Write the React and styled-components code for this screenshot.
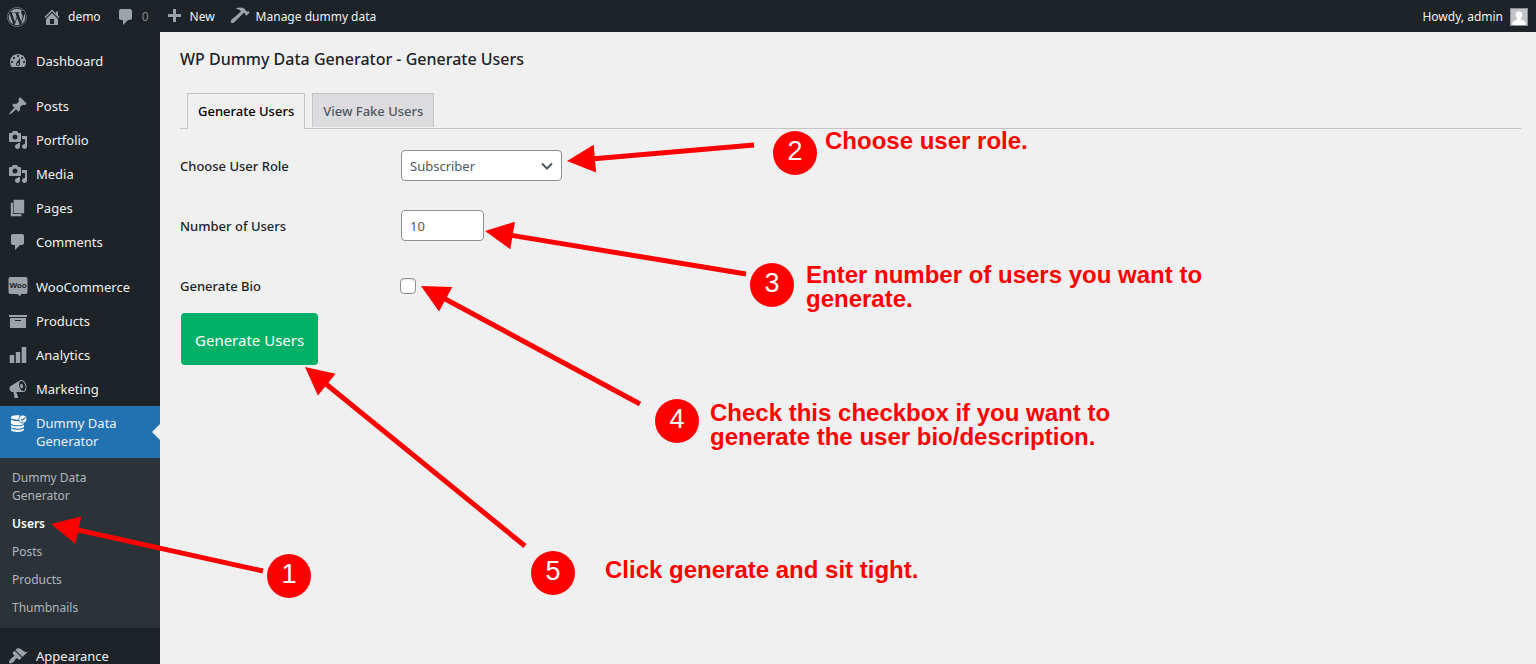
import React from "react";
import styled, { createGlobalStyle } from "styled-components";
import { FaWordpress } from "react-icons/fa";

const GlobalStyle = createGlobalStyle`
  *, *::before, *::after { box-sizing: border-box; }
  body {
    margin: 0;
    background: #f0f0f0;
    color: #3c434a;
    font-family: "Noto Sans", "Open Sans", sans-serif;
    font-size: 13px;
  }
  a { color: inherit; text-decoration: none; }
  ul { list-style: none; margin: 0; padding: 0; }
`;

/* ---------- icons ---------- */

const paths = {
  home: "M16 8.5l1.53 1.53-1.06 1.06L10 4.6l-6.47 6.49-1.06-1.06L10 2.5l4 4v-2h2v4zm-6-2.46l6 5.99V18H4v-5.97zM12 17v-5H8v5h4z",
  comments: "M5 2h9c1.1 0 2 .9 2 2v7c0 1.1-.9 2-2 2h-2l-5 5v-5H5c-1.1 0-2-.9-2-2V4c0-1.1.9-2 2-2z",
  plus: "M17 7v3h-5v5H9v-5H4V7h5V2h3v5h5z",
  hammer: "M5.7 1.6C8 .5 11.500.1 13.700 1.200c2 1 2.200 2.900 3.400 3.500l1.200-.7 1.300 1.400-3 3.400-1.500-1.300.3-1.200c-.8-.6-1.600-.5-2.300.1l-9.100 9c-.9.8-2 .8-2.700 0-.8-.8-.7-1.800.2-2.600l9.500-8.400C9.700 2.800 8.100 2.100 5.700 1.600z",
  dashboard: "M3.76 16h12.48c1.1-1.37 1.76-3.11 1.76-5 0-4.42-3.58-8-8-8s-8 3.58-8 8c0 1.89.66 3.63 1.76 5zM10 4c.55 0 1 .45 1 1s-.45 1-1 1-1-.45-1-1 .45-1 1-1zM6 6c.55 0 1 .45 1 1s-.45 1-1 1-1-.45-1-1 .45-1 1-1zm8 0c.55 0 1 .45 1 1s-.45 1-1 1-1-.45-1-1 .45-1 1-1zm-5.37 5.55L12 7v6c0 1.1-.9 2-2 2s-2-.9-2-2c0-.57.24-1.08.63-1.45zM4 10c.55 0 1 .45 1 1s-.45 1-1 1-1-.45-1-1 .45-1 1-1zm12 0c.55 0 1 .45 1 1s-.45 1-1 1-1-.45-1-1 .45-1 1-1zm-5 3c0-.55-.45-1-1-1s-1 .45-1 1 .45 1 1 1 1-.45 1-1z",
  pin: "M10.44 3.02l1.82-1.82 6.36 6.35-1.83 1.82c-1.05-.68-2.48-.57-3.41.36l-.75.75c-.92.93-1.04 2.35-.35 3.41l-1.83 1.82-2.41-2.41-2.8 2.79c-.42.42-3.38 2.71-3.8 2.29s1.86-3.39 2.28-3.81l2.79-2.79L4.1 9.36l1.83-1.82c1.05.69 2.48.57 3.4-.36l.75-.75c.93-.92 1.05-2.35.36-3.41z",
  media: "M13 11V4c0-.55-.45-1-1-1h-1.67L9 1H5L3.67 3H2c-.55 0-1 .45-1 1v7c0 .55.45 1 1 1h10c.55 0 1-.45 1-1zM7 4.5c1.38 0 2.5 1.12 2.5 2.5S8.38 9.5 7 9.5 4.5 8.38 4.5 7 5.62 4.5 7 4.5zM14 6h5v10.5c0 1.38-1.12 2.5-2.5 2.5S14 17.88 14 16.5s1.12-2.5 2.5-2.5c.17 0 .34.02.5.05V9h-3V6zm-4 8.05V13h2v3.5c0 1.38-1.12 2.5-2.5 2.5S7 17.88 7 16.5 8.12 14 9.5 14c.17 0 .34.02.5.05z",
  page: "M5.600 15.200V1.800h10.600v13.400H5.600zM5 16h8.500v2.200H2.800V4.800H5V16z",
  archive: "M19 4v2H1V4h18zM2 7h16v10H2V7zm11 3V9H7v1h6z",
  chart: "M18.300 18V2h-4.600v16h4.600zm-6.100 0V7H7.800v11h4.400zm-6 0v-8H1.700v8h4.500z",
  megaphone: "M18.15 5.94c.46 1.62.38 3.22-.02 4.48-.42 1.28-1.26 2.18-2.3 2.48-.16.06-.26.06-.4.06-.06.02-.12.02-.18.02-.06.02-.14.02-.22.02h-6.8l2.22 5.5c.02.14-.06.26-.14.34-.08.1-.24.16-.34.16H6.95c-.1 0-.26-.06-.34-.16-.08-.08-.16-.2-.14-.34l-1-5.5H4.25l-.02-.02c-.5.06-1.08-.18-1.54-.62s-.88-1.08-1.06-1.88c-.24-.8-.2-1.56-.02-2.2.18-.62.58-1.08 1.06-1.3l.02-.02 9-5.4c.1-.06.18-.1.24-.16.06-.04.14-.08.24-.12.16-.08.28-.12.5-.18 1.04-.3 2.24.1 3.22.98s1.84 2.24 2.26 3.86zm-2.58 5.98h-.02c.4-.1.74-.34 1.04-.7.58-.7.86-1.76.86-3.04 0-.64-.1-1.3-.28-1.98-.34-1.36-1.02-2.5-1.78-3.24s-1.68-1.1-2.46-.88c-.82.22-1.4.96-1.7 2-.32 1.04-.28 2.36.06 3.72.38 1.36 1 2.5 1.8 3.24.78.74 1.62 1.1 2.48.88zm-2.54-7.08c.22-.04.42-.02.62.04.38.16.76.48 1.02 1s.42 1.2.42 1.78c0 .3-.04.56-.12.8-.18.48-.44.84-.86.94-.34.1-.8-.06-1.14-.4s-.64-.86-.78-1.5c-.18-.62-.12-1.24.02-1.72s.48-.84.82-.94z",
  brush: "M14.48 11.06L7.41 3.99l1.5-1.5c.5-.56 2.3-.47 3.51.32 1.21.8 1.43 1.28 2.91 2.1 1.18.64 2.45 1.26 4.45.85zm-.71.71L6.7 4.7 4.93 6.47c-.39.39-.39 1.02 0 1.41l1.06 1.06c.39.39.39 1.03 0 1.42-.6.6-1.43 1.11-2.21 1.69-.35.26-.7.53-1.01.84C1.43 14.23.4 16.08 1.4 17.07c.99 1 2.84-.03 4.18-1.36.31-.31.58-.66.85-1.02.57-.78 1.08-1.61 1.69-2.21.39-.39 1.02-.39 1.41 0l1.06 1.06c.39.39 1.02.39 1.41 0z",
};

const IconSvg = styled.svg`
  flex: none;
  display: block;
  width: 20px;
  height: 20px;
  fill: currentColor;
`;

function Icon({ name }) {
  if (name === "woo") {
    return (
      <IconSvg viewBox="0 0 20 20" aria-hidden="true">
        <path d="M2.5 0h15a2 2 0 0 1 2 2v13a2 2 0 0 1-2 2H13l-.8 2.600L9.500 17h-7a2 2 0 0 1-2-2V2a2 2 0 0 1 2-2z" />
        <text x="10" y="11" textAnchor="middle" fontFamily="Liberation Sans, sans-serif" fontWeight="700" fontSize="8" fill="#1d2327">Woo</text>
      </IconSvg>
    );
  }
  if (name === "database") {
    return (
      <IconSvg viewBox="0 0 20 20" aria-hidden="true">
        <path d="M3 3.600C3 2 6 1.300 9.500 1.300c.9 0 1.700 0 2.500.2a4.300 4.300 0 0 0-1.500 4.200h-1C6 5.700 3 5.100 3 3.600z" />
        <path d="M3 5.500c1.300 1 3.800 1.500 6.500 1.500h1.400c.8 1.500 2.200 2.400 4 2.400.4 0 .8 0 1.100-.1v.1c-.5 1.200-3.300 1.900-6.500 1.900S3 10.600 3 9.100z" />
        <path d="M3 10.800c1.300 1 3.800 1.500 6.500 1.500s5.200-.5 6.500-1.500v2c-.5 1.200-3.300 1.900-6.500 1.900S3 14 3 12.800z" />
        <path d="M3 14.300c1.300 1 3.800 1.500 6.500 1.500s5.200-.5 6.500-1.500v1.500c-.5 1.500-3.300 2.200-6.500 2.200S3 17.300 3 15.800z" />
        <circle cx="14.800" cy="5" r="3.600" />
        <path d="M12.900 4.900l1.500 1.600L17.300 3.300" fill="none" stroke="#2271b1" strokeWidth="1.100" />
      </IconSvg>
    );
  }
  return (
    <IconSvg viewBox="0 0 20 20" aria-hidden="true">
      <path fillRule="evenodd" d={paths[name]} />
    </IconSvg>
  );
}

/* ---------- admin bar ---------- */

const Shell = styled.div`
  position: relative;
  display: flex;
  flex-direction: column;
  height: 100vh;
  overflow: hidden;
`;

const AdminBar = styled.header`
  flex: none;
  display: flex;
  align-items: center;
  gap: 15px;
  height: 32px;
  padding: 2px 8px 0 7px;
  background: #1d2327;
  color: #f0f0f1;
  font-size: 12px;
  line-height: 30px;
`;

const BarLink = styled.a`
  display: flex;
  align-items: center;
  gap: ${(p) => (p.$end ? 7 : 6)}px;
  height: 30px;
  margin-left: ${(p) => (p.$end ? "auto" : 0)};
  svg { color: #9ca2a7; }
`;

const WpLogo = styled(FaWordpress)`
  width: 20px;
  height: 20px;
`;

const Count = styled.span`
  color: #80868b;
`;

const Avatar = styled.svg`
  width: 18px;
  height: 18px;
  border: 1px solid #8c8f94;
  background: #c3c4c7;
`;

/* ---------- side menu ---------- */

const Body = styled.div`
  flex: 1;
  display: flex;
  min-height: 0;
`;

const Sidebar = styled.nav`
  flex: none;
  width: 160px;
  padding-top: 12px;
  overflow: hidden;
  background: #1d2327;
  color: #f0f0f1;
`;

const MenuItem = styled.li`
  margin-top: ${(p) => (p.$group ? 11 : 0)}px;
`;

const MenuLink = styled.a`
  position: relative;
  display: flex;
  align-items: flex-start;
  gap: 8px;
  padding: ${(p) => (p.$current ? "8px" : "7px 8px")};
  background: ${(p) => (p.$current ? "#2271b1" : "transparent")};
  line-height: ${(p) => (p.$current ? 18 : 20)}px;
  svg { color: ${(p) => (p.$current ? "#fff" : "#9ca2a7")}; }
  &::after {
    content: ${(p) => (p.$current ? '""' : "none")};
    position: absolute;
    right: 0;
    top: 50%;
    margin-top: -8px;
    border: 8px solid transparent;
    border-left-width: 0;
    border-right-color: #f0f0f0;
  }
`;

const SubMenu = styled.ul`
  padding: 6px 0;
  background: #2c3338;
`;

const SubLink = styled.a`
  display: block;
  padding: 5px 32px 5px 12px;
  color: ${(p) => (p.$current ? "#fff" : "#b1b5b8")};
  font-size: 12px;
  font-weight: ${(p) => (p.$current ? 600 : 400)};
  line-height: 18px;
`;

const menu = [
  { icon: "dashboard", label: "Dashboard" },
  { icon: "pin", label: "Posts", group: true },
  { icon: "media", label: "Portfolio" },
  { icon: "media", label: "Media" },
  { icon: "page", label: "Pages" },
  { icon: "comments", label: "Comments" },
  { icon: "woo", label: "WooCommerce", group: true },
  { icon: "archive", label: "Products" },
  { icon: "chart", label: "Analytics" },
  { icon: "megaphone", label: "Marketing" },
  {
    icon: "database",
    label: "Dummy Data Generator",
    current: true,
    children: ["Dummy Data Generator", "Users", "Posts", "Products", "Thumbnails"],
  },
  { icon: "brush", label: "Appearance", group: true },
];

/* ---------- page ---------- */

const Main = styled.main`
  flex: 1;
  min-width: 0;
  padding: 15px 15px 0 20px;
`;

const Title = styled.h1`
  margin: 0 0 22px;
  color: #1d2327;
  font-size: 16px;
  font-weight: 500;
  line-height: 24px;
`;

const Tabs = styled.nav`
  display: flex;
  align-items: flex-start;
  gap: 7px;
  height: 36px;
  padding-left: 7px;
  border-bottom: 1px solid #c3c4c7;
`;

const Tab = styled.a`
  height: ${(p) => (p.$active ? 36 : 34)}px;
  padding: 0 10px;
  border: 1px solid #c3c4c7;
  border-bottom: 0;
  background: ${(p) => (p.$active ? "#f0f0f0" : "#dcdcde")};
  color: ${(p) => (p.$active ? "#000" : "#50575e")};
  font-weight: 500;
  line-height: 35px;
`;

const Form = styled.form`
  padding-top: 21px;
`;

const Fields = styled.div`
  display: grid;
  gap: 29px;
  margin-bottom: 12px;
`;

const Field = styled.div`
  display: grid;
  grid-template-columns: 220px auto;
  align-items: center;
  justify-content: start;
  height: 31px;
`;

const FieldLabel = styled.label`
  color: #1d2327;
  font-weight: 500;
  line-height: 20px;
`;

const SelectBox = styled.div`
  position: relative;
  width: 161px;
  margin: 0 1px;
`;

const controlStyle = `
  display: block;
  height: 31px;
  border: 1px solid #8c8f94;
  border-radius: 4px;
  background: #fff;
  color: #50575e;
  font: 400 13px/29px "Noto Sans", "Open Sans", sans-serif;
`;

const Select = styled.select`
  ${controlStyle}
  width: 100%;
  padding: 1px 24px 0 8px;
  appearance: none;
`;

const Chevron = styled.svg`
  position: absolute;
  right: 9px;
  top: 10px;
  width: 12px;
  height: 12px;
  fill: none;
  stroke: #50575e;
  stroke-width: 2;
  pointer-events: none;
`;

const NumberInput = styled.input`
  ${controlStyle}
  width: 83px;
  margin: 0 1px;
  padding: 1px 8px 0;
  appearance: textfield;
`;

const Checkbox = styled.input`
  appearance: none;
  width: 16px;
  height: 16px;
  margin: 0;
  border: 1px solid #8c8f94;
  border-radius: 4px;
  background: #fff;
  box-shadow: inset 0 1px 2px rgba(0, 0, 0, 0.1);
`;

const SubmitButton = styled.button`
  height: 52px;
  margin: 0 1px;
  padding: 2px 14px 0;
  border: 0;
  border-radius: 4px;
  background: #00b067;
  color: #fff;
  font: 400 15px/20px "Noto Sans", "Open Sans", sans-serif;
`;

/* ---------- tutorial callouts ---------- */

const Annotations = styled.div`
  position: absolute;
  inset: 0;
  pointer-events: none;
  font-family: "Liberation Sans", Arial, sans-serif;
`;

const Arrows = styled.svg`
  position: absolute;
  inset: 0;
  width: 100%;
  height: 100%;
  stroke: #f00;
  stroke-width: 5;
`;

const Badge = styled.span`
  position: absolute;
  left: ${(p) => p.$x}px;
  top: ${(p) => p.$y}px;
  width: 44px;
  height: 44px;
  border-radius: 50%;
  background: #f00;
  color: #fff;
  font-size: 27px;
  line-height: 41px;
  text-align: center;
`;

const Note = styled.p`
  position: absolute;
  left: ${(p) => p.$x}px;
  top: ${(p) => p.$y}px;
  margin: 0;
  color: #f00;
  font-size: 24px;
  font-weight: 700;
  line-height: 24px;
  white-space: pre-line;
`;

const steps = [
  { badge: [267, 554], tip: [51, 524], tail: [263, 571] },
  { badge: [773, 131], tip: [567, 161], tail: [754, 145], at: [825, 129], note: "Choose user role." },
  { badge: [750, 263], tip: [485, 231], tail: [746, 274], at: [806, 263], note: "Enter number of users you want to\ngenerate." },
  { badge: [655, 399], tip: [421, 286], tail: [640, 404], at: [710, 401], note: "Check this checkbox if you want to\ngenerate the user bio/description." },
  { badge: [531, 551], tip: [305, 367], tail: [525, 546], at: [605, 558], note: "Click generate and sit tight." },
];

function Callouts() {
  return (
    <Annotations>
      <Arrows aria-hidden="true">
        {steps.map(({ tip, tail }, i) => {
          const len = Math.hypot(tail[0] - tip[0], tail[1] - tip[1]);
          const ux = (tail[0] - tip[0]) / len;
          const uy = (tail[1] - tip[1]) / len;
          const bx = tip[0] + ux * 28;
          const by = tip[1] + uy * 28;
          const head = [tip, [bx - uy * 14, by + ux * 14], [bx + uy * 14, by - ux * 14]];
          return (
            <g key={i}>
              <line x1={bx - ux} y1={by - uy} x2={tail[0]} y2={tail[1]} />
              <polygon points={head.join(" ")} fill="#f00" stroke="none" />
            </g>
          );
        })}
      </Arrows>
      {steps.map(({ badge, at, note }, i) => (
        <React.Fragment key={i}>
          <Badge $x={badge[0]} $y={badge[1]}>{i + 1}</Badge>
          {note && <Note $x={at[0]} $y={at[1]}>{note}</Note>}
        </React.Fragment>
      ))}
    </Annotations>
  );
}

export default function App() {
  return (
    <Shell>
      <GlobalStyle />
      <AdminBar>
        <BarLink href="#wp" aria-label="About WordPress"><WpLogo /></BarLink>
        <BarLink href="#site"><Icon name="home" />demo</BarLink>
        <BarLink href="#comments"><Icon name="comments" /><Count>0</Count></BarLink>
        <BarLink href="#new"><Icon name="plus" />New</BarLink>
        <BarLink href="#manage"><Icon name="hammer" />Manage dummy data</BarLink>
        <BarLink href="#profile" $end>
          Howdy, admin
          <Avatar viewBox="0 0 16 16" aria-hidden="true">
            <path fill="#fff" d="M8 2.500a3.300 3.300 0 0 1 3.300 3.400c0 1.500-.7 2.800-1.600 3.500v1c1.900.4 4.300 1.300 4.800 3.600V16h-13v-2c.5-2.300 2.900-3.200 4.800-3.600v-1c-.9-.7-1.600-2-1.600-3.500A3.300 3.300 0 0 1 8 2.500z" />
          </Avatar>
        </BarLink>
      </AdminBar>
      <Body>
        <Sidebar aria-label="Main menu">
          <ul>
            {menu.map((m) => (
              <MenuItem key={m.label} $group={m.group}>
                <MenuLink href="#menu" $current={m.current}>
                  <Icon name={m.icon} />
                  <span>{m.label}</span>
                </MenuLink>
                {m.children && (
                  <SubMenu>
                    {m.children.map((c) => (
                      <li key={c}><SubLink href="#sub" $current={c === "Users"}>{c}</SubLink></li>
                    ))}
                  </SubMenu>
                )}
              </MenuItem>
            ))}
          </ul>
        </Sidebar>
        <Main>
          <Title>WP Dummy Data Generator - Generate Users</Title>
          <Tabs aria-label="Sections">
            <Tab href="#generate" $active>Generate Users</Tab>
            <Tab href="#view">View Fake Users</Tab>
          </Tabs>
          <Form onSubmit={(e) => e.preventDefault()}>
            <Fields>
              <Field>
                <FieldLabel htmlFor="role">Choose User Role</FieldLabel>
                <SelectBox>
                  <Select id="role" defaultValue="Subscriber">
                    <option>Subscriber</option>
                    <option>Editor</option>
                  </Select>
                  <Chevron viewBox="0 0 12 12" aria-hidden="true"><path d="M1 3.500l5 5 5-5" /></Chevron>
                </SelectBox>
              </Field>
              <Field>
                <FieldLabel htmlFor="count">Number of Users</FieldLabel>
                <NumberInput id="count" type="number" defaultValue={10} />
              </Field>
              <Field>
                <FieldLabel htmlFor="bio">Generate Bio</FieldLabel>
                <Checkbox id="bio" type="checkbox" />
              </Field>
            </Fields>
            <SubmitButton type="submit">Generate Users</SubmitButton>
          </Form>
        </Main>
      </Body>
      <Callouts />
    </Shell>
  );
}
